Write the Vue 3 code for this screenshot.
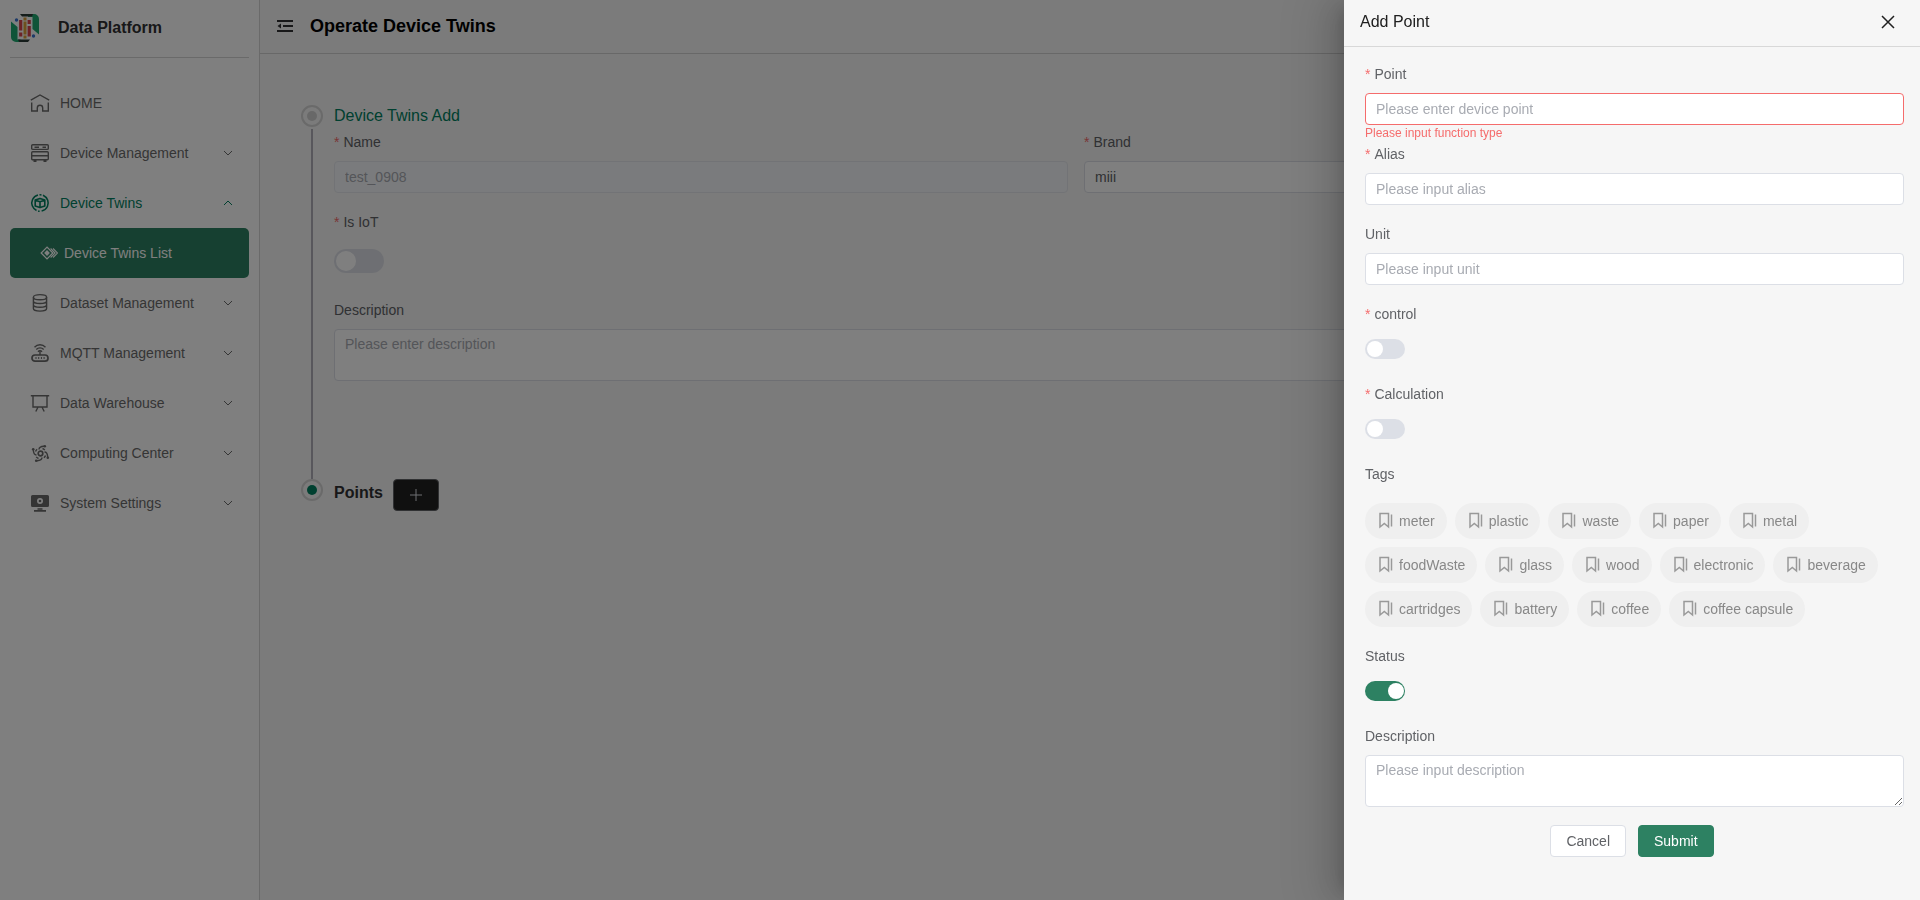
<template>
  <div class="layout">
    <aside class="sidebar">
      <div class="brand">
        <svg class="brand-logo" viewBox="0 0 30 30" aria-hidden="true">
          <path d="M1 8.5l6.5 5.5v12.5h3V29H6a5 5 0 0 1-5-5z" fill="#1fa971" />
          <path d="M18 1h6a5 5 0 0 1 5 5v15.500l-6.500-5.500V4h-4.500z" fill="#1fa971" />
          <path d="M10 1h13l-1 2.400H12z M8 26.600h12l-2 2.400H9z" fill="#2b3a36" />
          <path d="M10.700 7v10.500M10.700 19.500v4M19.200 7v4M19.200 13v10.500" stroke="#d8444c" stroke-width="3.200" />
          <path d="M15 4.500v22" stroke="#dca03a" stroke-width="3" stroke-dasharray="3 1 13 1" />
          <circle cx="6.500" cy="7" r="1.700" fill="#3a74d0" />
          <circle cx="23.500" cy="23" r="1.700" fill="#3a74d0" />
        </svg>
        <span>Data Platform</span>
      </div>

      <nav class="menu">
        <a
          v-for="item in menu"
          :key="item.title"
          href="#"
          class="menu-item"
          :class="{ open: item.open, child: item.child }"
          @click.prevent
        >
          <svg class="menu-icon" viewBox="0 0 20 20" aria-hidden="true" v-html="icons[item.icon]"></svg>
          <span class="menu-title">{{ item.title }}</span>
          <svg v-if="item.arrow" class="menu-arrow" viewBox="0 0 10 6" aria-hidden="true">
            <path :d="item.open ? 'M1 5l4-4 4 4' : 'M1 1l4 4 4-4'" />
          </svg>
        </a>
      </nav>
    </aside>

    <main class="main">
      <header class="topbar">
        <button class="fold-btn" aria-label="Collapse menu">
          <svg viewBox="0 0 16 16" aria-hidden="true">
            <path d="M0 3h16M6 8h10M0 13h16" stroke="currentColor" stroke-width="2" />
            <path d="M4 5.500v5L.5 8z" fill="currentColor" />
          </svg>
        </button>
        <h1>Operate Device Twins</h1>
      </header>

      <div class="steps">
        <section class="step">
          <div class="step-rail">
            <span class="step-dot"></span>
            <span class="step-line"></span>
          </div>
          <div class="step-body">
            <h2 class="step-title">Device Twins Add</h2>
            <div class="form-row">
              <div class="form-item">
                <label class="required" for="twin-name">Name</label>
                <input id="twin-name" v-model="twin.name" type="text" disabled />
              </div>
              <div class="form-item">
                <label class="required" for="twin-brand">Brand</label>
                <input id="twin-brand" v-model="twin.brand" type="text" />
              </div>
            </div>
            <div class="form-item">
              <label class="required" for="twin-iot">Is IoT</label>
              <div class="switch-box large">
                <input id="twin-iot" v-model="twin.isIot" class="switch" type="checkbox" role="switch" />
              </div>
            </div>
            <div class="form-item">
              <label for="twin-desc">Description</label>
              <textarea id="twin-desc" v-model="twin.description" placeholder="Please enter description"></textarea>
            </div>
          </div>
        </section>

        <section class="step">
          <div class="step-rail">
            <span class="step-dot current"></span>
          </div>
          <div class="points-head">
            <h2>Points</h2>
            <button class="add-btn" aria-label="Add point" @click="drawerOpen = true">
              <svg viewBox="0 0 12 12" aria-hidden="true"><path d="M6 0v12M0 6h12" /></svg>
            </button>
          </div>
        </section>
      </div>
    </main>

    <!-- DRAWER -->
    <div v-if="drawerOpen" class="overlay" @click.self="closeDrawer">
      <div class="drawer" role="dialog" aria-labelledby="drawer-title">
        <header class="drawer-header">
          <h2 id="drawer-title">Add Point</h2>
          <button class="close-btn" aria-label="Close" @click="closeDrawer">
            <svg viewBox="0 0 14 14" aria-hidden="true"><path d="M1 1l12 12M13 1L1 13" /></svg>
          </button>
        </header>

        <form class="drawer-body" @submit.prevent>
          <div class="drawer-fields">
            <div v-for="field in fields" :key="field.key" class="form-item">
              <label :class="{ required: field.required }" :for="field.key">{{ field.label }}</label>
              <input
                :id="field.key"
                v-model="point[field.key]"
                type="text"
                :class="{ invalid: field.error }"
                :placeholder="field.placeholder"
              />
              <p v-if="field.error" class="error">{{ field.error }}</p>
            </div>

            <div class="form-item">
              <label class="required" for="control">control</label>
              <div class="switch-box">
                <input id="control" v-model="point.control" class="switch" type="checkbox" role="switch" />
              </div>
            </div>
            <div class="form-item">
              <label class="required" for="calculation">Calculation</label>
              <div class="switch-box">
                <input id="calculation" v-model="point.calculation" class="switch" type="checkbox" role="switch" />
              </div>
            </div>

            <div class="form-item">
              <span id="tags-label" class="label">Tags</span>
              <div class="tags" role="group" aria-labelledby="tags-label">
                <button
                  v-for="tag in tags"
                  :key="tag"
                  type="button"
                  class="tag"
                  :class="{ selected: point.tags.includes(tag) }"
                  @click="toggleTag(tag)"
                >
                  <svg viewBox="0 0 18 18" aria-hidden="true">
                    <path d="M3 1.500h8.500v13.500l-4.200-3.500L3 15z" />
                    <path d="M14.500 2.500V14.500" />
                  </svg>
                  {{ tag }}
                </button>
              </div>
            </div>

            <div class="form-item">
              <label for="status">Status</label>
              <div class="switch-box">
                <input id="status" v-model="point.status" class="switch" type="checkbox" role="switch" />
              </div>
            </div>
            <div class="form-item">
              <label for="point-desc">Description</label>
              <textarea id="point-desc" v-model="point.description" placeholder="Please input description"></textarea>
            </div>
          </div>

          <div class="drawer-actions">
            <button type="button" class="btn" @click="closeDrawer">Cancel</button>
            <button type="submit" class="btn primary">Submit</button>
          </div>
        </form>
      </div>
    </div>
  </div>
</template>

<script setup>
import { ref, reactive } from 'vue'

const drawerOpen = ref(true)

const menu = [
  { title: 'HOME', icon: 'home' },
  { title: 'Device Management', icon: 'server', arrow: true },
  { title: 'Device Twins', icon: 'twins', arrow: true, open: true },
  { title: 'Device Twins List', icon: 'list', child: true },
  { title: 'Dataset Management', icon: 'database', arrow: true },
  { title: 'MQTT Management', icon: 'router', arrow: true },
  { title: 'Data Warehouse', icon: 'board', arrow: true },
  { title: 'Computing Center', icon: 'compute', arrow: true },
  { title: 'System Settings', icon: 'monitor', arrow: true }
]

// one arm of the computing icon, repeated around the hub
const computeArm = '<path d="M9 6.500C9 4 10.500 3.500 14 3.300"/><circle cx="14.800" cy="3.200" r="1.300" fill="currentColor" stroke="none"/><path d="M12.500 5.500a5.400 5.400 0 0 1 2.300 1.600"/>'

const icons = {
  home: '<path d="M.8 7.200L10 2l9.200 5.200M1.700 9.500V18h5.600v-3a2.700 2.700 0 0 1 5.400 0v3h5.600V9.500"/>',
  server: '<rect x="1.700" y="1.800" width="16.600" height="4.600" rx="1"/><path d="M4.500 4.200h4.500M12.500 4.200h3.500M1.700 12.800h16.600"/><rect x="1.700" y="8.800" width="16.600" height="8" rx="1"/><path d="M5 17v2M15 17v2" stroke-width="3"/>',
  twins: '<circle cx="10" cy="10" r="8.200" stroke-width="1.600" stroke-dasharray="20 1.500 2 1.500 21 2 1.500 2" transform="rotate(115 10 10)"/><path d="M5.200 7L10 5.400 14.800 7v6L10 14.600 5.200 13zM5.200 7.200L10 8.800l4.800-1.600M10 8.800v5.800" stroke-width="1.600" stroke-linejoin="round"/>',
  list: '<path d="M7.800 3.500L1.300 10l6.500 6.500 6.500-6.500z"/><path d="M7.800 6.800L4.600 10l3.200 3.200L11 10z" fill="currentColor" stroke="none"/><path d="M11.800 5l5 5-5 5M14.500 5l5 5-5 5" stroke-width="1.200"/>',
  database: '<ellipse cx="10" cy="4.200" rx="6.600" ry="2.600"/><path d="M3.400 4.200v11.400c0 1.400 3 2.500 6.600 2.500s6.600-1.100 6.600-2.500V4.200M3.400 8c0 1.400 3 2.500 6.600 2.500s6.600-1.100 6.600-2.500M3.400 11.800c0 1.400 3 2.500 6.600 2.500s6.600-1.100 6.600-2.500"/>',
  router: '<rect x="2" y="12" width="16" height="6.200" rx="3" stroke-width="1.700"/><path d="M5.500 15.100h1M8.200 15.100h1M10.900 15.100h1M13.600 15.100h1" stroke-width="2"/><path d="M10 8.800V12M4.500 4.200c3-3.200 8-3.200 11 0M6.300 6.500c2-2.200 5.400-2.200 7.400 0M8 8.700c1.100-1.200 2.900-1.200 4 0"/>',
  board: '<path d="M.8 2.800h18.400M3 2.800V14h14V2.800M7.800 14.500l-2 4M12.200 14.500l2 4"/>',
  compute: '<circle cx="10.500" cy="10.500" r="2.300" stroke-width="1.700"/>' +
    [0, 90, 180, 270].map((deg) => `<g transform="rotate(${deg} 10.500 10.500)">${computeArm}</g>`).join(''),
  monitor: '<path fill-rule="evenodd" d="M2.500 2h15A1.500 1.500 0 0 1 19 3.500v9a1.500 1.500 0 0 1-1.500 1.500h-15A1.500 1.500 0 0 1 1 12.500v-9A1.500 1.500 0 0 1 2.500 2zM10 5a3 3 0 1 0 0 6 3 3 0 0 0 0-6z" fill="currentColor" stroke="none"/><circle cx="10" cy="8" r="1.300" fill="currentColor" stroke="none"/><path d="M7.500 16h5M4 17.800h12" stroke-width="1.700"/>'
}

const twin = reactive({
  name: 'test_0908',
  brand: 'miii',
  isIot: false,
  description: ''
})

const fields = [
  {
    key: 'point',
    label: 'Point',
    required: true,
    placeholder: 'Please enter device point',
    error: 'Please input function type'
  },
  { key: 'alias', label: 'Alias', required: true, placeholder: 'Please input alias' },
  { key: 'unit', label: 'Unit', placeholder: 'Please input unit' }
]

const point = reactive({
  point: '',
  alias: '',
  unit: '',
  control: false,
  calculation: false,
  tags: [],
  status: true,
  description: ''
})

const tags = [
  'meter', 'plastic', 'waste', 'paper', 'metal',
  'foodWaste', 'glass', 'wood', 'electronic', 'beverage',
  'cartridges', 'battery', 'coffee', 'coffee capsule'
]

function toggleTag(tag) {
  const idx = point.tags.indexOf(tag)
  if (idx === -1) {
    point.tags.push(tag)
  } else {
    point.tags.splice(idx, 1)
  }
}

function closeDrawer() {
  drawerOpen.value = false
}
</script>

<style>
body {
  background: #f6f6f6;
}
</style>

<style scoped>
.layout {
  display: flex;
  min-height: 100vh;
  font-family: "Liberation Sans", Arial, sans-serif;
  font-size: 14px;
  color: #606266;
}

.layout *,
.layout {
  box-sizing: border-box;
}

h1,
h2,
p {
  margin: 0;
}

button {
  font: inherit;
  color: inherit;
  padding: 0;
  cursor: pointer;
}

/* Sidebar */
.sidebar {
  flex: 0 0 260px;
  padding: 0 10px;
  background: #fff;
  border-right: 1px solid #d4d4d4;
}

.brand {
  display: flex;
  align-items: center;
  gap: 18px;
  height: 58px;
  padding-bottom: 2px;
  border-bottom: 1px solid #d4d4d4;
  font-size: 16px;
  font-weight: bold;
  color: #303133;
}

.brand-logo {
  width: 30px;
  height: 30px;
}

.menu {
  padding-top: 20px;
}

.menu-item {
  display: flex;
  align-items: center;
  gap: 10px;
  height: 50px;
  padding: 0 16px 0 20px;
  border-radius: 5px;
  color: #6b6b6b;
  text-decoration: none;
}

.menu-item.open {
  color: #008060;
}

.menu-item.child {
  gap: 6px;
  padding-left: 30px;
  background: #2d8162;
  color: #fff;
}

.menu-icon {
  width: 20px;
  height: 20px;
  fill: none;
  stroke: currentColor;
  stroke-width: 1.4;
}

.child .menu-icon {
  width: 18px;
  height: 18px;
}

.menu-title {
  flex: 1;
}

.menu-arrow {
  width: 10px;
  height: 6px;
  fill: none;
  stroke: currentColor;
}

/* Main */
.main {
  flex: 1;
  min-width: 0;
}

.topbar {
  display: flex;
  align-items: center;
  gap: 17px;
  height: 54px;
  padding: 0 17px 2px;
  border-bottom: 1px solid #d0d0d0;
}

.topbar h1 {
  font-size: 18px;
  line-height: 26px;
  color: #000;
}

.fold-btn {
  display: flex;
  border: none;
  background: none;
  color: #303133;
}

.fold-btn svg {
  width: 16px;
  height: 16px;
}

.steps {
  padding: 51px 102px 40px 41px;
}

.step {
  display: flex;
  gap: 11px;
}

.step-rail {
  display: flex;
  flex-direction: column;
  align-items: center;
  gap: 2px;
}

.step-dot {
  display: flex;
  align-items: center;
  justify-content: center;
  width: 22px;
  height: 22px;
  border: 2px solid #d4d4d4;
  border-radius: 50%;
}

.step-dot::after {
  content: "";
  width: 10px;
  height: 10px;
  border-radius: 50%;
  background: #d0d0d0;
}

.step-dot.current::after {
  background: #008060;
}

.step-line {
  flex: 1;
  width: 2px;
  background: #b0afb8;
}

.step-body {
  flex: 1;
  padding-bottom: 80px;
}

.step-title {
  margin-bottom: 4px;
  font-size: 16px;
  line-height: 22px;
  font-weight: normal;
  color: #008060;
}

.form-row {
  display: grid;
  grid-template-columns: 1fr 1fr;
  gap: 16px;
}

.points-head {
  display: flex;
  align-items: flex-start;
  gap: 10px;
}

.points-head h2 {
  font-size: 16px;
  line-height: 28px;
  color: #303133;
}

.add-btn {
  display: flex;
  align-items: center;
  justify-content: center;
  width: 46px;
  height: 32px;
  border: 1px solid #606266;
  border-radius: 4px;
  background: #202020;
}

.add-btn svg {
  width: 12px;
  height: 12px;
  stroke: #dcdfe6;
}

/* Form controls */
.form-item {
  position: relative;
  margin-bottom: 18px;
}

.form-item label,
.form-item .label {
  display: block;
  margin-bottom: 8px;
  line-height: 22px;
}

.required::before {
  content: "*";
  margin-right: 4px;
  color: #f56c6c;
}

input[type="text"],
textarea {
  display: block;
  width: 100%;
  height: 32px;
  padding: 0 10px;
  border: 1px solid #dcdfe6;
  border-radius: 4px;
  background: #fff;
  font: inherit;
  color: #606266;
  outline: none;
}

textarea {
  height: 52px;
  padding: 4px 10px;
  line-height: 21px;
  resize: vertical;
}

input::placeholder,
textarea::placeholder {
  color: #a8abb2;
}

input[type="text"]:disabled {
  background: #f5f7fa;
  border-color: #e4e7ed;
  color: #a8abb2;
}

input[type="text"].invalid {
  border-color: #f56c6c;
}

.error {
  position: absolute;
  top: 100%;
  left: 0;
  padding-top: 2px;
  font-size: 12px;
  line-height: 12px;
  color: #f56c6c;
}

.switch-box {
  display: flex;
  align-items: center;
  height: 32px;
}

.switch-box.large {
  height: 40px;
}

.switch {
  appearance: none;
  display: flex;
  width: 40px;
  height: 20px;
  margin: 0;
  padding: 2px;
  border-radius: 12px;
  background: #dcdfe6;
  cursor: pointer;
}

.switch::before {
  content: "";
  width: 16px;
  height: 16px;
  border-radius: 50%;
  background: #fff;
}

.switch:checked {
  justify-content: flex-end;
  padding-right: 1px;
  background: #2d8162;
}

.large .switch {
  width: 50px;
  height: 24px;
}

.large .switch::before {
  width: 20px;
  height: 20px;
}

/* Drawer */
.overlay {
  position: fixed;
  inset: 0;
  display: flex;
  justify-content: flex-end;
  background: rgba(0, 0, 0, 0.5);
  overflow: hidden;
}

.drawer {
  width: 30%;
  background: #f6f6f6;
  box-shadow: -16px 0 48px 16px rgba(0, 0, 0, 0.08), -12px 0 32px rgba(0, 0, 0, 0.12),
    -8px 0 16px -8px rgba(0, 0, 0, 0.16);
  overflow-y: auto;
}

.drawer-header {
  display: flex;
  align-items: center;
  justify-content: space-between;
  height: 47px;
  padding: 0 25px 2px 16px;
  border-bottom: 1px solid #d8d8d8;
}

.drawer-header h2 {
  font-size: 16px;
  font-weight: normal;
  color: #202020;
}

.close-btn {
  display: flex;
  border: none;
  background: none;
  color: #202020;
}

.close-btn svg {
  width: 14px;
  height: 14px;
  fill: none;
  stroke: currentColor;
  stroke-width: 1.5;
}

.drawer-body {
  padding: 16px;
}

.drawer-fields {
  padding-left: 5px;
}

.tags {
  display: flex;
  flex-wrap: wrap;
  gap: 8px;
  padding-top: 10px;
}

.tag {
  display: flex;
  align-items: center;
  gap: 4px;
  height: 36px;
  padding: 0 12px;
  border: none;
  border-radius: 18px;
  background: #efefef;
  color: #888;
}

.tag svg {
  width: 18px;
  height: 18px;
  fill: none;
  stroke: #999;
  stroke-width: 1.5;
}

.tag.selected {
  background: #2d8162;
  color: #fff;
}

.tag.selected svg {
  stroke: #fff;
}

.drawer-actions {
  display: flex;
  justify-content: center;
  gap: 12px;
}

.btn {
  height: 32px;
  padding: 0 15px;
  border: 1px solid #dcdfe6;
  border-radius: 4px;
  background: #fff;
}

.btn.primary {
  border-color: #2d8162;
  background: #2d8162;
  color: #fff;
}
</style>
